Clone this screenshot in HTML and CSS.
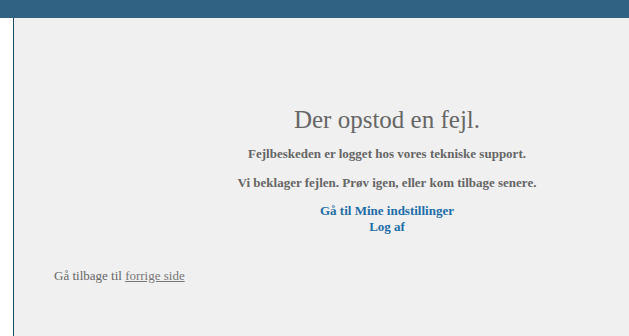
FILE: index.html
```html
<!DOCTYPE html>
<html lang="da">
<head>
  <meta charset="UTF-8">
  <meta name="viewport" content="width=device-width, initial-scale=1.0">
  <title>Der opstod en fejl</title>
  <link rel="stylesheet" href="styles.css">
</head>
<body>
  <header class="topbar"></header>
  <div class="page">
    <div class="side"></div>
    <main class="content">
      <div class="error">
        <h1>Der opstod en fejl.</h1>
        <p>Fejlbeskeden er logget hos vores tekniske support.</p>
        <p class="last">Vi beklager fejlen. Prøv igen, eller kom tilbage senere.</p>
        <div class="links">
          <a href="#">Gå til Mine indstillinger</a>
          <a href="#">Log af</a>
        </div>
      </div>
      <div class="back">Gå tilbage til <a href="#">forrige side</a></div>
    </main>
  </div>
</body>
</html>
```

FILE: styles.css
```css
html, body {
  height: 100%;
}
body {
  margin: 0;
  font-family: 'Liberation Serif', 'Times New Roman', serif;
  font-size: 13px;
  color: #666;
  background-color: #fff;
  display: flex;
  flex-direction: column;
  overflow: hidden;
}
.topbar {
  height: 18px;
  background-color: #306283;
  flex: none;
}
.page {
  flex: 1;
  display: flex;
}
.side {
  width: 13px;
  flex: none;
  background-color: #fff;
}
.content {
  flex: 1;
  background-color: #f0f0f0;
  border-left: 1px solid #1d4a6a;
  padding-top: 88px;
  min-width: 0;
}
.error {
  padding-left: 131px;
  text-align: center;
}
.error h1 {
  margin: 0 0 12px;
  font-size: 25px;
  font-weight: normal;
  color: #666;
}
.error p {
  margin: 0 0 13px;
  font-weight: bold;
}
.error p.last {
  margin-bottom: 12px;
}
.links a {
  display: block;
  line-height: 16px;
  color: #1f6ea8;
  font-weight: bold;
  text-decoration: none;
}
.back {
  margin-top: 33px;
  padding-left: 40px;
}
.back a {
  color: #777;
}
```
